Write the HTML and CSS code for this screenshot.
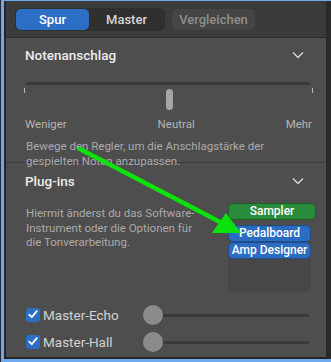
FILE: index.html
```html
<!DOCTYPE html>
<html lang="de">
<head>
  <meta charset="UTF-8">
  <title>Spur-Inspektor</title>
  <link rel="stylesheet" href="styles.css">
</head>
<body>
  <div class="frame">
    <div class="panel">

      <div class="toolbar">
        <div class="segmented">
          <button class="seg active">Spur</button>
          <button class="seg">Master</button>
        </div>
        <button class="compare">Vergleichen</button>
      </div>

      <section class="section velocity">
        <div class="head">
          <span>Notenanschlag</span>
          <svg class="chevron" width="12" height="8" viewBox="0 0 12 8"><path d="M1 1.5 L6 6.5 L11 1.5" fill="none" stroke="#d8d8d8" stroke-width="1.4"/></svg>
        </div>

        <div class="slider">
          <span class="tick left"></span>
          <span class="tick right"></span>
          <div class="track"></div>
          <div class="knob"></div>
        </div>

        <div class="scale">
          <span>Weniger</span>
          <span>Neutral</span>
          <span>Mehr</span>
        </div>

        <p class="hint">Bewege den Regler, um die Anschlagstärke der gespielten Noten anzupassen.</p>
      </section>

      <section class="section plugins">
        <div class="head">
          <span>Plug-ins</span>
          <svg class="chevron" width="12" height="8" viewBox="0 0 12 8"><path d="M1 1.5 L6 6.5 L11 1.5" fill="none" stroke="#d8d8d8" stroke-width="1.4"/></svg>
        </div>

        <div class="plugin-body">
          <p class="hint">Hiermit änderst du das Software-Instrument oder die Optionen für die Tonverarbeitung.</p>
          <div class="slots">
            <div class="slot instrument">Sampler</div>
            <div class="fx">
              <div class="slot effect">Pedalboard</div>
              <div class="slot effect">Amp Designer</div>
            </div>
          </div>
        </div>

        <div class="sends">
          <div class="send">
            <label class="check"><span class="box">
              <svg width="10" height="9" viewBox="0 0 10 9"><path d="M1.2 4.6 L3.8 7.2 L8.8 1.2" fill="none" stroke="#fff" stroke-width="1.8" stroke-linecap="round" stroke-linejoin="round"/></svg>
            </span>Master-Echo</label>
            <div class="send-slider"><div class="send-track"></div><div class="send-knob"></div></div>
          </div>
          <div class="send">
            <label class="check"><span class="box">
              <svg width="10" height="9" viewBox="0 0 10 9"><path d="M1.2 4.6 L3.8 7.2 L8.8 1.2" fill="none" stroke="#fff" stroke-width="1.8" stroke-linecap="round" stroke-linejoin="round"/></svg>
            </span>Master-Hall</label>
            <div class="send-slider"><div class="send-track"></div><div class="send-knob"></div></div>
          </div>
        </div>
      </section>

    </div>
  </div>

  <!-- Markierungspfeil über der Oberfläche -->
  <svg class="arrow" width="331" height="362" viewBox="0 0 331 362">
    <line x1="78" y1="148" x2="222" y2="223" stroke="#0be10b" stroke-width="4.5"/>
    <polygon points="241,233 212,233 226,213" fill="#0be10b"/>
  </svg>
</body>
</html>
```

FILE: styles.css
```css
* { box-sizing: border-box; }

body {
  margin: 0;
  width: 331px;
  height: 362px;
  overflow: hidden;
  background: #262626;
  font-family: Roboto, "Noto Sans", sans-serif;
  position: relative;
}

.frame {
  margin-left: 1px;
  width: 330px;
  height: 362px;
  border-left: 3px solid #6ea8ee;
  border-top: 1px solid #6ea8ee;
  border-bottom: 3px solid #6ea8ee;
  background: #2a2a2a;
}

.panel {
  width: 322px;
  height: 100%;
  border-left: 2px solid #262626;
  border-bottom: 2px solid #262626;
  background: #4e4e4e;
}

.toolbar {
  height: 37px;
  background: #3b3b3b;
  border-bottom: 1px solid #2c2c2c;
  display: flex;
  align-items: flex-start;
  padding: 7px 0 0 9px;
  gap: 7px;
}

.segmented {
  display: flex;
  width: 150px;
  height: 23px;
  padding: 1px;
  background: #2f2f2f;
  border-radius: 6px;
}

.seg {
  flex: 1;
  border: none;
  background: none;
  color: #d4d4d4;
  font-family: inherit;
  font-size: 13px;
  font-weight: 500;
  border-radius: 5px;
  padding: 0;
}

.seg.active {
  flex: 0 0 73px;
  background: #2c6ec4;
  color: #fff;
}

.compare {
  margin-top: 1px;
  width: 83px;
  height: 21px;
  border: none;
  border-radius: 5px;
  background: #454545;
  color: #8e8e8e;
  font-family: inherit;
  font-size: 13px;
  font-weight: 500;
  padding: 0;
}

.section {
  padding: 7px 10px 0 19px;
}

.velocity {
  border-bottom: 1px solid #3c3c3c;
  height: 125px;
}

.plugins {
  padding-top: 8px;
}

.head {
  display: flex;
  justify-content: space-between;
  align-items: center;
  height: 20px;
  color: #ececec;
  font-size: 13.5px;
  font-weight: 500;
}

.chevron {
  margin-right: 12px;
}

.slider {
  position: relative;
  height: 30px;
  margin-top: 4px;
}

.tick {
  position: absolute;
  top: 6px;
  width: 1px;
  height: 5px;
  background: #b8b8b8;
}
.tick.left { left: -1px; }
.tick.right { left: 287px; }

.track {
  margin: 17px 0 0 1px;
  width: 284px;
  height: 3px;
  border-radius: 2px;
  background: #3a3a3a;
}

.knob {
  position: absolute;
  left: 141px;
  top: 7px;
  width: 7px;
  height: 21px;
  border-radius: 4px;
  background: #a6a6a6;
}

.scale {
  display: flex;
  justify-content: space-between;
  width: 287px;
  margin-top: 5px;
  font-size: 11.5px;
  color: #b4b4b4;
}

.hint {
  margin: 8px 0 0 1px;
  font-size: 11.5px;
  line-height: 14.5px;
  color: #ababab;
}

.velocity .hint {
  width: 260px;
}

.plugin-body {
  display: flex;
  justify-content: space-between;
  margin-top: 12px;
  height: 90px;
}

.plugin-body .hint {
  margin-top: 3px;
  width: 178px;
}

.slots {
  width: 88px;
  display: flex;
  flex-direction: column;
  gap: 5px;
}

.slot {
  height: 17px;
  border-radius: 5px;
  color: #fff;
  font-size: 12px;
  font-weight: 500;
  text-align: center;
  line-height: 15px;
}

.instrument {
  background: #2a8a3c;
  border: 1px solid #1d5d29;
}

.fx {
  width: 83px;
  height: 67px;
  border-radius: 5px;
  background: #474747;
  display: flex;
  flex-direction: column;
}

.effect {
  background: #2b6cc2;
  border: 1px solid #1f4d8a;
}

.sends {
  display: flex;
  flex-direction: column;
  gap: 12px;
  margin-top: 14px;
}

.send {
  display: flex;
  align-items: center;
  height: 15px;
}

.check {
  display: flex;
  align-items: center;
  gap: 3px;
  width: 117px;
  margin-left: 1px;
  color: #d2d2d2;
  font-size: 13.5px;
}

.box {
  width: 14px;
  height: 14px;
  border-radius: 3px;
  background: #2c6ec4;
  display: flex;
  align-items: center;
  justify-content: center;
}

.send-slider {
  position: relative;
  flex: 1;
  height: 20px;
  margin-right: 7px;
}

.send-track {
  margin: 9px 0 0 8px;
  height: 3px;
  border-radius: 2px;
  background: #3a3a3a;
}

.send-knob {
  position: absolute;
  left: 0;
  top: 0;
  width: 20px;
  height: 20px;
  border-radius: 50%;
  background: #8b8b8b;
}

.arrow {
  position: absolute;
  left: 0;
  top: 0;
  pointer-events: none;
}
```
